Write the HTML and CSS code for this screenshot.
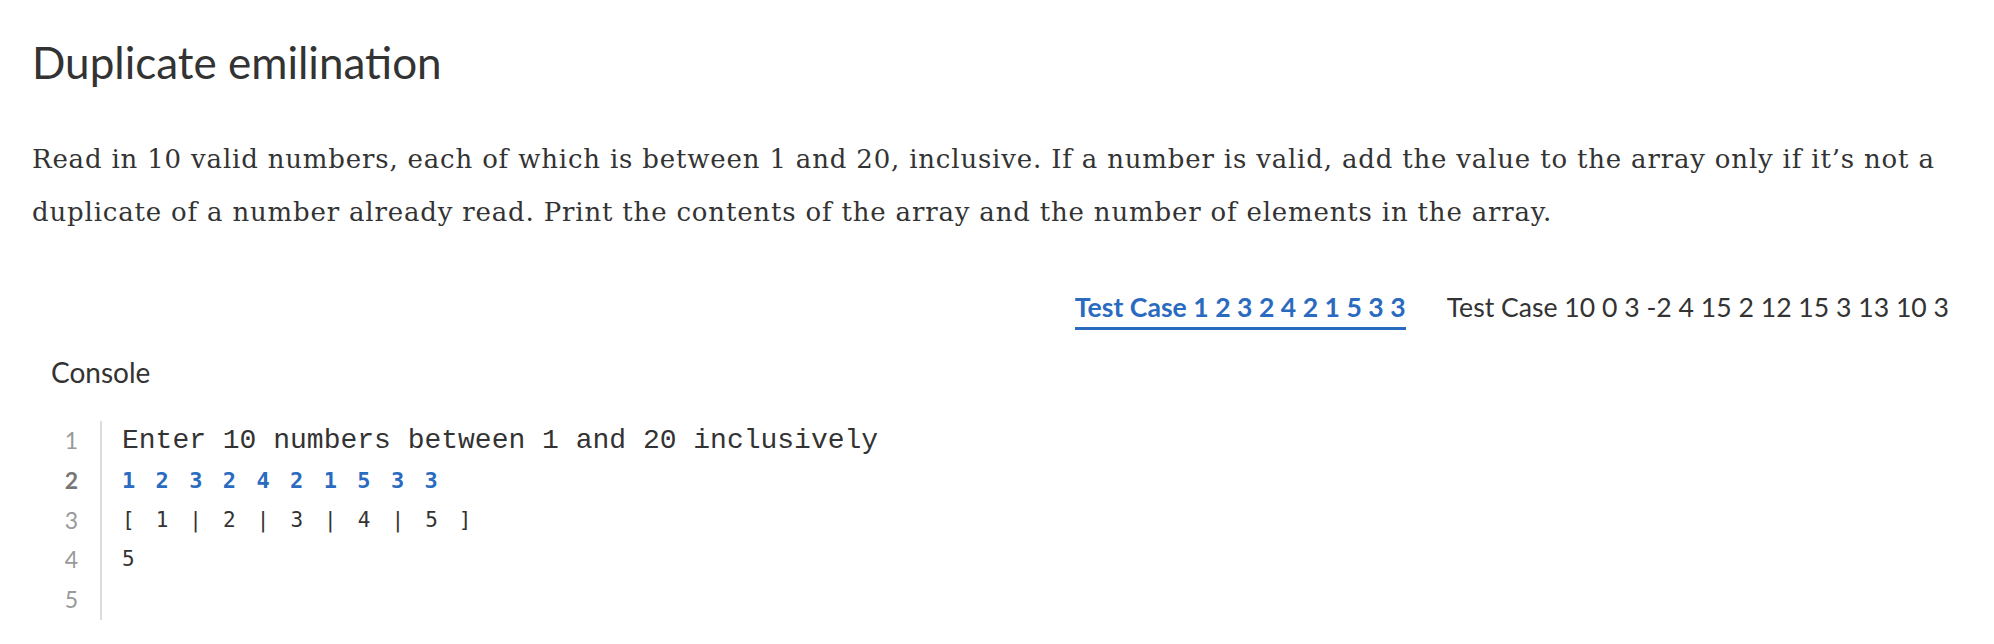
FILE: index.html
```html
<!DOCTYPE html>
<html>
<head>
<meta charset="utf-8">
<link rel="stylesheet" href="styles.css">
</head>
<body>
<div class="page">
  <h1 class="title">Duplicate emilination</h1>
  <p class="desc">Read in 10 valid numbers, each of which is between 1 and 20, inclusive. If a number is valid, add the value to the array only if it’s not a duplicate of a number already read. Print the contents of the array and the number of elements in the array.</p>
  <div class="tabs">
    <span class="tab active">Test Case 1 2 3 2 4 2 1 5 3 3</span>
    <span class="tab">Test Case 10 0 3 -2 4 15 2 12 15 3 13 10 3</span>
  </div>
  <div class="console-label">Console</div>
  <div class="console">
    <div class="gutter">
      <div class="ln">1</div>
      <div class="ln cur">2</div>
      <div class="ln">3</div>
      <div class="ln">4</div>
      <div class="ln">5</div>
    </div>
    <div class="code">
      <div class="line out">Enter 10 numbers between 1 and 20 inclusively</div>
      <div class="line input">1 2 3 2 4 2 1 5 3 3</div>
      <div class="line res">[ 1 | 2 | 3 | 4 | 5 ]</div>
      <div class="line res">5</div>
      <div class="line"></div>
    </div>
  </div>
</div>
</body>
</html>
```
FILE: styles.css
```css
html, body {
  margin: 0;
  padding: 0;
  background: #fff;
}
.page {
  padding: 36px 28px 0 32px;
  color: #333;
}
.title {
  margin: 0;
  font-family: Lato, "Liberation Sans", sans-serif;
  font-weight: 400;
  font-size: 44px;
  line-height: 52px;
  color: #333;
}
.desc {
  margin: 45px 0 0 0;
  font-family: "DejaVu Serif", "Liberation Serif", serif;
  font-size: 26px;
  letter-spacing: 0.82px;
  line-height: 53px;
  color: #333;
}
.tabs {
  margin-top: 50px;
  display: flex;
  justify-content: flex-end;
  gap: 41px;
  padding-right: 17px;
  font-family: Lato, "Liberation Sans", sans-serif;
  font-size: 26.6px;
  line-height: 36px;
}
.tab {
  color: #333;
  padding-bottom: 2px;
  border-bottom: 3px solid transparent;
}
.tab.active {
  color: #2a6bbf;
  font-weight: 700;
  border-bottom-color: #2a6bbf;
}
.console-label {
  margin: 24px 0 0 19px;
  font-family: Lato, "Liberation Sans", sans-serif;
  font-size: 28px;
  line-height: 36px;
  color: #333;
}
.console {
  margin-top: 31px;
  display: flex;
}
.gutter {
  width: 46px;
  padding-right: 22px;
  border-right: 2px solid #ddd;
  font-family: Lato, "Liberation Sans", sans-serif;
  font-size: 23px;
  color: #999;
  text-align: right;
}
.ln {
  height: 39.8px;
  line-height: 39.8px;
}
.ln.cur {
  color: #777;
  font-weight: 700;
}
.code {
  padding-left: 20px;
}
.line {
  height: 39.8px;
  line-height: 39.8px;
  white-space: pre;
}
.line.out {
  font-family: "Liberation Mono", "Courier New", monospace;
  font-size: 28px;
  color: #333;
}
.line.input {
  font-family: "DejaVu Sans Mono", monospace;
  font-size: 22px;
  letter-spacing: 3.56px;
  font-weight: 700;
  color: #2a6bbf;
}
.line.res {
  font-family: "DejaVu Sans Mono", monospace;
  font-size: 21px;
  letter-spacing: 4.2px;
  color: #333;
}
```
